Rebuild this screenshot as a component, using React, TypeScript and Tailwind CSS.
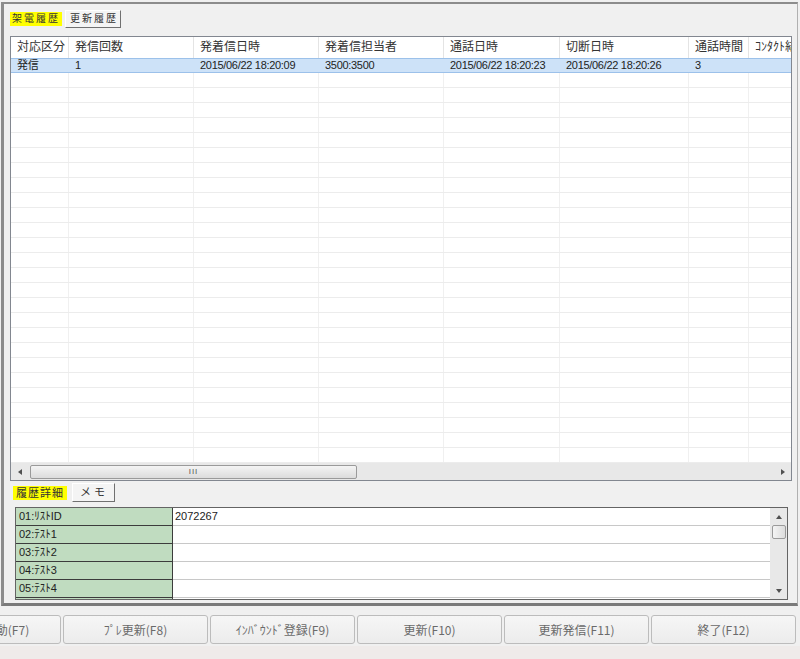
import React from 'react';

// Column widths of the call history grid
const COLS = [58, 125, 125, 125, 116, 129, 60, 120];

const HEADERS = ['対応区分', '発信回数', '発着信日時', '発着信担当者', '通話日時', '切断日時', '通話時間', 'ｺﾝﾀｸﾄ結果'];

const FIRST_ROW = ['発信', '1', '2015/06/22 18:20:09', '3500:3500', '2015/06/22 18:20:23', '2015/06/22 18:20:26', '3', ''];

const DETAILS = [
    { label: '01:ﾘｽﾄID', value: '2072267' },
    { label: '02:ﾃｽﾄ1', value: '' },
    { label: '03:ﾃｽﾄ2', value: '' },
    { label: '04:ﾃｽﾄ3', value: '' },
    { label: '05:ﾃｽﾄ4', value: '' },
    { label: '06:ﾃｽﾄ5', value: '' },
];

const BUTTONS = ['リスト移動(F7)', 'ﾌﾟﾚ更新(F8)', 'ｲﾝﾊﾞｳﾝﾄﾞ登録(F9)', '更新(F10)', '更新発信(F11)', '終了(F12)'];

const font = "font-['Liberation_Sans','Noto_Sans_CJK_JP',sans-serif]";

function Tri({ dir }: { dir: 'l' | 'r' | 'u' | 'd' }) {
    const pts = {
        l: '4,0 0,3 4,6',
        r: '0,0 4,3 0,6',
        u: '0,4 3,0 6,4',
        d: '0,0 6,0 3,4',
    }[dir];
    const w = dir === 'l' || dir === 'r' ? 4 : 6;
    const h = dir === 'l' || dir === 'r' ? 6 : 4;
    return (
        <svg width={w} height={h} viewBox={`0 0 ${w} ${h}`}>
            <polygon points={pts} fill="#505050" />
        </svg>
    );
}

function App() {
    const emptyRows = Array.from({ length: 26 });

    return (
        <div className={`w-[800px] h-[659px] bg-[#f0f0f0] overflow-hidden flex flex-col text-[#222] ${font}`}>
            {/* Main panel */}
            <div className="mt-[2px] ml-[1px] w-[797px] h-[604px] shrink-0 border-t-2 border-l-[3px] border-r border-b-[3px] border-t-[#8c8c8c] border-l-[#8c8c8c] border-r-[#b0b0b0] border-b-[#7a7a7a] flex flex-col">
                {/* Top tabs */}
                <div className="h-[18px] mt-[6px] ml-[6px] flex items-center gap-[3px]">
                    <div className="w-[52px] h-[14px] bg-[#ffff00] text-[10px] leading-[14px] tracking-[2px] pl-[2px] text-[#333] whitespace-nowrap overflow-hidden">架電履歴</div>
                    <div className="w-[56px] h-[18px] bg-[#f4f4f4] border border-t-white border-l-white border-r-[#707070] border-b-[#707070] text-[10px] leading-[16px] tracking-[2px] pl-[4px] text-[#333] whitespace-nowrap overflow-hidden">更新履歴</div>
                </div>

                {/* Grid */}
                <div className="mt-[8px] ml-[6px] w-[782px] h-[445px] shrink-0 border border-[#828790] bg-white flex flex-col overflow-hidden">
                    <div className="h-[21px] flex shrink-0">
                        {HEADERS.map((h, i) => (
                            <div key={h} style={{ width: COLS[i] }} className="shrink-0 border-r border-[#e4e4e4] pl-[6px] pt-[3px] text-[12px] leading-[14px] text-[#333] whitespace-nowrap overflow-hidden">
                                {h}
                            </div>
                        ))}
                    </div>
                    <div className="h-[15px] flex shrink-0 bg-[#cde2f8] border-y border-[#9cc1ea]">
                        {FIRST_ROW.map((c, i) => (
                            <div key={i} style={{ width: COLS[i] }} className="shrink-0 pl-[6px] text-[11px] leading-[13px] tracking-[-0.3px] whitespace-nowrap">
                                {c}
                            </div>
                        ))}
                    </div>
                    <div className="flex-1 overflow-hidden">
                        {emptyRows.map((_, r) => (
                            <div key={r} className="h-[15px] flex border-b border-[#ececec]">
                                {COLS.map((w, i) => (
                                    <div key={i} style={{ width: w }} className="shrink-0 border-r border-[#f0f0f0]" />
                                ))}
                            </div>
                        ))}
                    </div>
                    {/* Horizontal scrollbar */}
                    <div className="h-[17px] shrink-0 bg-[#e8e8e8] flex items-center">
                        <div className="w-[17px] flex justify-center"><Tri dir="l" /></div>
                        <div className="ml-[2px] w-[327px] h-[14px] rounded-[2px] border border-[#9a9a9a] bg-gradient-to-b from-[#f4f4f4] to-[#dcdcdc] flex items-center justify-center text-[8px] text-[#555] tracking-[1px]">
                            III
                        </div>
                        <div className="flex-1" />
                        <div className="w-[17px] flex justify-center"><Tri dir="r" /></div>
                    </div>
                </div>

                {/* Detail tabs */}
                <div className="h-[19px] mt-[2px] ml-[9px] flex items-center gap-[5px]">
                    <div className="w-[54px] h-[14px] bg-[#ffff00] text-[11px] leading-[14px] tracking-[1px] pl-[3px] text-[#333] whitespace-nowrap overflow-hidden">履歴詳細</div>
                    <div className="w-[43px] h-[19px] bg-[#f4f4f4] border border-t-white border-l-white border-r-[#707070] border-b-[#707070] text-[11px] leading-[17px] tracking-[3px] pl-[7px] text-[#333] whitespace-nowrap">メモ</div>
                </div>

                {/* Detail box */}
                <div className="mt-[5px] ml-[11px] w-[773px] h-[93px] shrink-0 border border-[#646464] bg-white flex overflow-hidden">
                    <div className="flex-1 overflow-hidden">
                        {DETAILS.map((d) => (
                            <div key={d.label} className="h-[18px] flex">
                                <div className="w-[157px] shrink-0 bg-[#c0dcc0] border-b border-r border-[#3c3c3c] pl-[3px] text-[11px] leading-[17px]">
                                    {d.label}
                                </div>
                                <div className="flex-1 border-b border-[#c8c8c8] pl-[2px] text-[11px] leading-[17px]">{d.value}</div>
                            </div>
                        ))}
                    </div>
                    {/* Vertical scrollbar */}
                    <div className="w-[17px] shrink-0 bg-[#e8e8e8] flex flex-col items-center">
                        <div className="h-[17px] flex items-center"><Tri dir="u" /></div>
                        <div className="w-[14px] h-[14px] rounded-[2px] border border-[#9a9a9a] bg-gradient-to-r from-[#f4f4f4] to-[#dcdcdc]" />
                        <div className="flex-1" />
                        <div className="h-[17px] flex items-center"><Tri dir="d" /></div>
                    </div>
                </div>
            </div>

            {/* Function buttons */}
            <div className="mt-[9px] h-[29px] shrink-0 flex gap-[2px] ml-[-84px]">
                {BUTTONS.map((b) => (
                    <div key={b} className="w-[145px] h-[29px] shrink-0 rounded-[3px] border border-[#bcbcbc] bg-gradient-to-b from-[#f6f6f6] to-[#ececec] flex items-center justify-center text-[12px] text-[#6a6a6a] whitespace-nowrap font-['Noto_Sans_CJK_JP',sans-serif]">
                        {b}
                    </div>
                ))}
            </div>
            <div className="mt-[2px] flex-1 bg-[#efebea]" />
        </div>
    );
}

export default App;
